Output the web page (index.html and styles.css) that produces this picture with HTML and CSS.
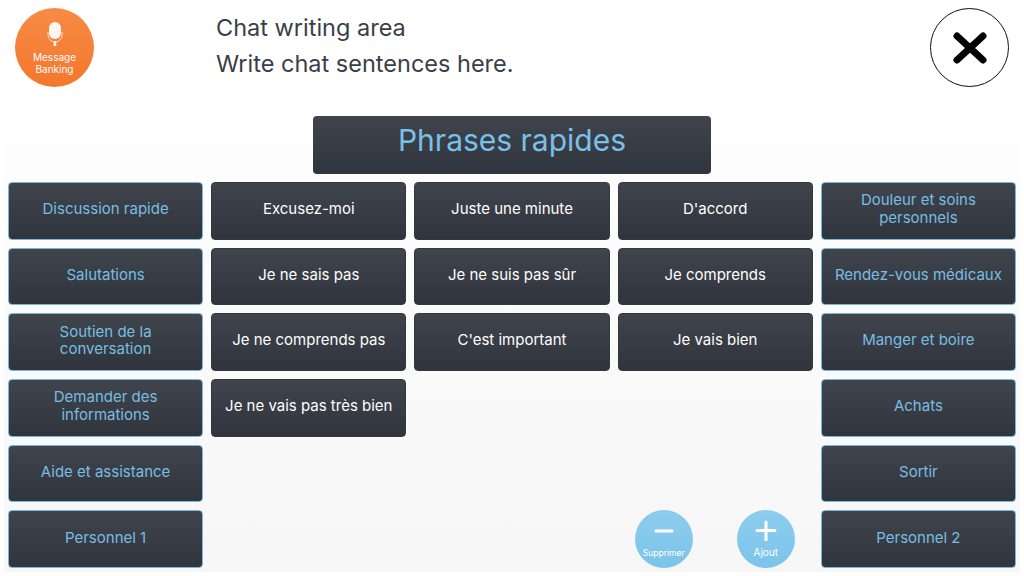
FILE: index.html
```html
<!DOCTYPE html>
<html lang="en">
<head>
    <meta charset="UTF-8">
    <meta name="viewport" content="width=device-width, initial-scale=1.0">
    <title>Phrases rapides</title>
    <link rel="stylesheet" href="styles.css">
</head>
<body>
    <header class="top-bar">
        <button type="button" class="banking-btn">
            <svg class="mic-icon" width="16" height="24" viewBox="0 0 16 24">
                <rect x="2" y="0" width="12" height="17" rx="6" fill="#fff" fill-opacity="0.92"/>
                <path d="M1 10v3a7 7 0 0 0 14 0V10" fill="none" stroke="#fff" stroke-opacity="0.7" stroke-width="1"/>
                <path d="M8 19v5" stroke="#fff" stroke-width="2.500"/>
            </svg>
            <span>Message<br>Banking</span>
        </button>
        <div class="chat-area">
            <p>Chat writing area</p>
            <p>Write chat sentences here.</p>
        </div>
        <button type="button" class="close-btn" aria-label="Close">
            <svg width="34" height="32" viewBox="0 0 34 32">
                <path d="M4 4L30 28M30 4L4 28" stroke="#000" stroke-width="7" stroke-linecap="round"/>
            </svg>
        </button>
    </header>

    <main class="panel">
        <h1 class="panel-title">Phrases rapides</h1>
        <div class="phrase-grid">
            <button type="button" class="tile category">Discussion rapide</button>
            <button type="button" class="tile">Excusez-moi</button>
            <button type="button" class="tile">Juste une minute</button>
            <button type="button" class="tile">D'accord</button>
            <button type="button" class="tile category">Douleur et soins personnels</button>

            <button type="button" class="tile category">Salutations</button>
            <button type="button" class="tile">Je ne sais pas</button>
            <button type="button" class="tile">Je ne suis pas sûr</button>
            <button type="button" class="tile">Je comprends</button>
            <button type="button" class="tile category">Rendez-vous médicaux</button>

            <button type="button" class="tile category">Soutien de la conversation</button>
            <button type="button" class="tile">Je ne comprends pas</button>
            <button type="button" class="tile">C'est important</button>
            <button type="button" class="tile">Je vais bien</button>
            <button type="button" class="tile category">Manger et boire</button>

            <button type="button" class="tile category">Demander des informations</button>
            <button type="button" class="tile">Je ne vais pas très bien</button>
            <div class="spacer"></div>
            <div class="spacer"></div>
            <button type="button" class="tile category">Achats</button>

            <button type="button" class="tile category">Aide et assistance</button>
            <div class="spacer"></div>
            <div class="spacer"></div>
            <div class="spacer"></div>
            <button type="button" class="tile category">Sortir</button>

            <button type="button" class="tile category">Personnel 1</button>
            <div class="spacer"></div>
            <div class="actions">
                <button type="button" class="round-btn">
                    <svg width="24" height="24" viewBox="0 0 24 24">
                        <path d="M4 14h16" stroke="#fff" stroke-width="3" stroke-linecap="round"/>
                    </svg>
                    <span class="round-label small">Supprimer</span>
                </button>
                <button type="button" class="round-btn">
                    <svg width="24" height="24" viewBox="0 0 24 24">
                        <path d="M12 5v18M3 13.500h18" stroke="#fff" stroke-width="3" stroke-linecap="round"/>
                    </svg>
                    <span class="round-label">Ajout</span>
                </button>
            </div>
            <button type="button" class="tile category">Personnel 2</button>
        </div>
    </main>
</body>
</html>
```

FILE: styles.css
```css
* {
    box-sizing: border-box;
}
html, body {
    height: 100%;
}
body {
    margin: 0;
    background-color: #fff;
    color: #3a3e47;
    font-family: Inter, "Open Sans", Arial, sans-serif;
    overflow: hidden;
}
button {
    font-family: inherit;
    cursor: pointer;
}
.top-bar {
    display: flex;
    align-items: flex-start;
    height: 100px;
    padding: 8px 15px 0 15px;
}
.banking-btn {
    display: flex;
    flex-direction: column;
    align-items: center;
    flex: none;
    width: 79px;
    height: 79px;
    padding: 14px 0 0 0;
    border: none;
    border-radius: 50%;
    background: linear-gradient(#f78b45, #f4772c);
    color: #fff;
    font-size: 10px;
    line-height: 12px;
}
.mic-icon {
    margin-bottom: 5px;
}
.chat-area {
    flex: 1;
    margin-left: 122px;
    padding-top: 2px;
    font-size: 23.500px;
    line-height: 36px;
}
.chat-area p {
    margin: 0;
}
.close-btn {
    display: flex;
    align-items: center;
    justify-content: center;
    flex: none;
    width: 79px;
    height: 79px;
    padding: 0;
    border: 1px solid #111;
    border-radius: 50%;
    background-color: #fff;
}
.panel {
    height: 472px;
    margin: 0 4px;
    padding: 16px 4px 0 4px;
    background: linear-gradient(#fefefe, #f7f7f7);
}
.panel-title {
    width: 398px;
    height: 58px;
    margin: 0 auto 8px auto;
    border-radius: 4px;
    background: linear-gradient(#40444d, #30343c);
    color: #79c1e8;
    font-size: 30px;
    font-weight: 400;
    line-height: 49px;
    text-align: center;
}
.phrase-grid {
    display: grid;
    grid-template-columns: repeat(5, 1fr);
    grid-auto-rows: 57.700px;
    gap: 8px;
}
.tile {
    padding: 0 10px 4px 10px;
    border: 1px solid #33373f;
    border-radius: 4px;
    background: linear-gradient(#40444d, #30343c);
    color: #fff;
    font-size: 15px;
    line-height: 17.500px;
}
.category {
    border-color: #74b8da;
    color: #78bee2;
}
.actions {
    display: flex;
    grid-column: span 2;
    justify-content: flex-end;
    gap: 44px;
    padding-right: 18px;
}
.round-btn {
    display: flex;
    flex-direction: column;
    align-items: center;
    width: 58px;
    height: 58px;
    padding: 7px 0 0 0;
    border: none;
    border-radius: 50%;
    background: linear-gradient(#8ccdee, #7cc4ea);
    color: #fff;
}
.round-label {
    margin-top: 5px;
    font-size: 10px;
    line-height: 12px;
}
.round-label.small {
    margin-top: 6px;
    font-size: 8.500px;
}
```
